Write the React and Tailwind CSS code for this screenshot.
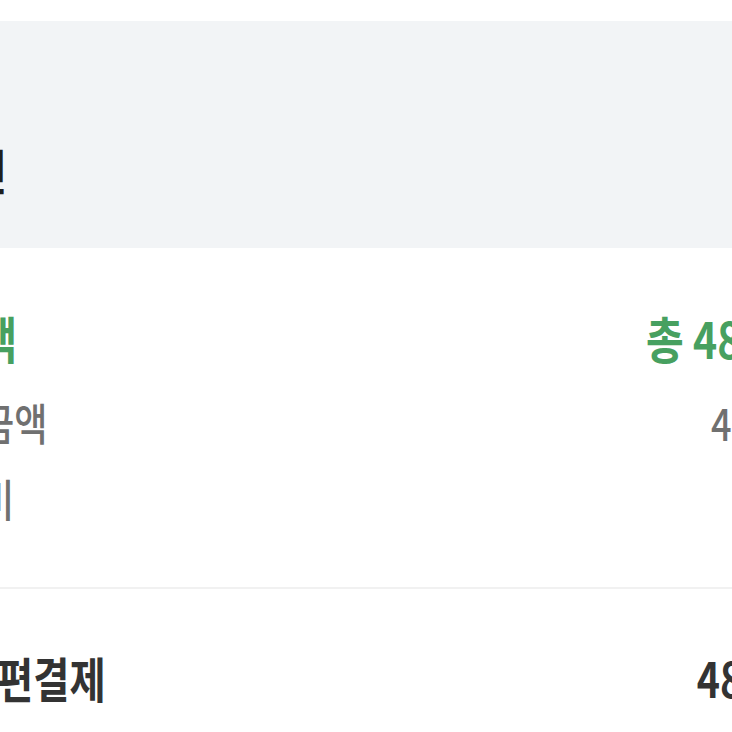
import React from 'react';

const rows = [
  { label: '상품금액', value: '48,000원' },
  { label: '배송비', value: '0원' },
];

export default function App() {
  return (
    <div className="h-[732px] w-[732px] overflow-hidden bg-white font-['Noto_Sans_CJK_KR',sans-serif]">
      <div className="w-[893px] origin-top-left scale-x-[0.82]">
        <div className="-ml-[202px] w-[1267px] pt-[21px]">
          <div className="flex h-[227px] items-end bg-[#f2f4f6] pr-[20px] pl-[34px] pb-[55px]">
            <h1 className="text-[48px] leading-none font-bold text-[#1e1e1e]">결제확인</h1>
          </div>

          <div className="flex flex-col pr-[10px] pl-[39px] pt-[64px] pb-[67px]">
            <div className="flex items-center justify-between text-[50px] leading-none font-bold text-[#47a060]">
              <span>결제금액</span>
              <span>총 48,000원</span>
            </div>
            <div className="mt-[38px] flex flex-col gap-[32px] pr-[9px] pl-[59px] text-[44px] leading-none font-medium text-[#707070]">
              {rows.map((r) => (
                <div key={r.label} className="flex items-center justify-between">
                  <span>{r.label}</span>
                  <span>{r.value}</span>
                </div>
              ))}
            </div>
          </div>

          <div className="h-[2px] bg-[#f1f1f1]" />

          <div className="flex items-center justify-between pr-[14px] pl-[55px] pt-[64px] text-[48px] leading-none font-bold text-[#333333]">
            <span>페이 간편결제</span>
            <span>48,000원</span>
          </div>
        </div>
      </div>
    </div>
  );
}
